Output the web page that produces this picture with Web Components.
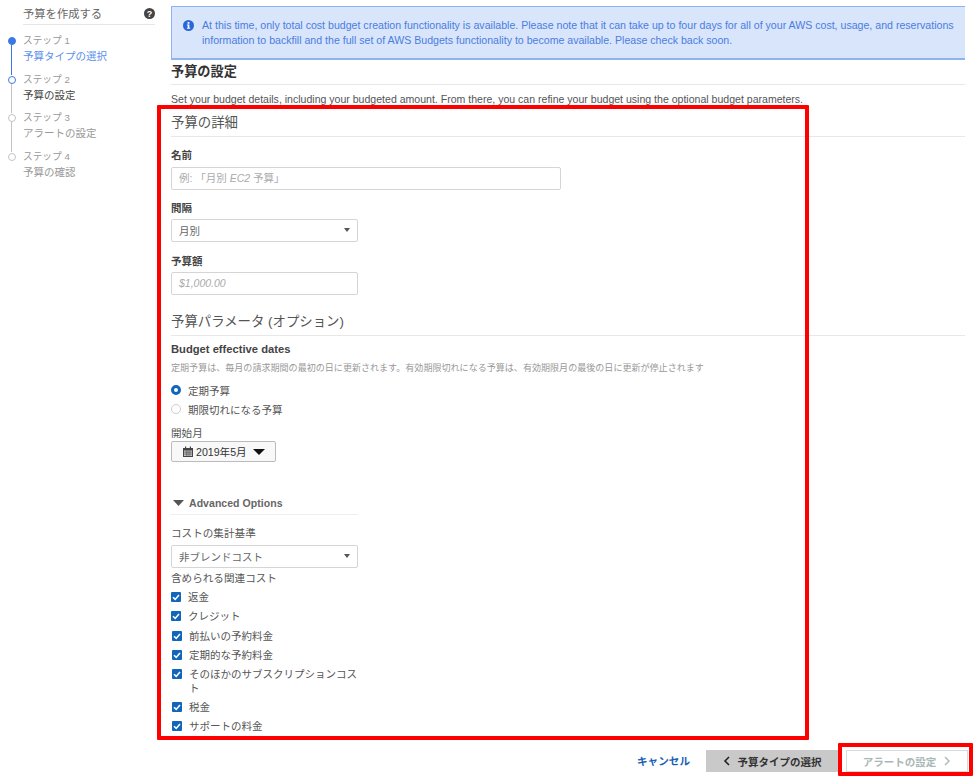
<!DOCTYPE html>
<html lang="ja"><head><meta charset="utf-8"><title>予算の設定</title>
<style>
html,body{margin:0;padding:0;background:#fff}
body{width:976px;height:776px;overflow:hidden;position:relative;font-family:"Liberation Sans","Noto Sans CJK JP",sans-serif;color:#444;font-size:10.5px}
</style></head><body>
<budget-layout>
  <budget-sidebar slot="side">
    <budget-step num="ステップ 1" name="予算タイプの選択" state="done"></budget-step>
    <budget-step num="ステップ 2" name="予算の設定" state="current"></budget-step>
    <budget-step num="ステップ 3" name="アラートの設定" state="todo"></budget-step>
    <budget-step num="ステップ 4" name="予算の確認" state="last"></budget-step>
  </budget-sidebar>
  <budget-notice>At this time, only total cost budget creation functionality is available. Please note that it can take up to four days for all of your AWS cost, usage, and reservations information to backfill and the full set of AWS Budgets functionality to become available. Please check back soon.</budget-notice>
  <section-head kind="main" style="margin-top:3px">予算の設定</section-head>
  <budget-text style="margin-top:8px;height:13px;font-size:10.55px">Set your budget details, including your budgeted amount. From there, you can refine your budget using the optional budget parameters.</budget-text>
  <section-head style="margin-top:6px">予算の詳細</section-head>
  <field-label style="margin-top:12px">名前</field-label>
  <text-field width="390">例: 「月別 <i>EC2</i> 予算」</text-field>
  <field-label style="margin-top:12px;margin-bottom:4px">間隔</field-label>
  <select-field value="月別"></select-field>
  <field-label style="margin-top:13px;margin-bottom:4px">予算額</field-label>
  <text-field width="187"><i>$1,000.00</i></text-field>
  <section-head style="margin-top:16px">予算パラメータ (オプション)</section-head>
  <field-label style="margin-top:7px;font-size:11.2px">Budget effective dates</field-label>
  <budget-text kind="hint" style="margin-top:1px">定期予算は、毎月の請求期間の最初の日に更新されます。有効期限切れになる予算は、有効期限月の最後の日に更新が停止されます</budget-text>
  <radio-option checked style="margin-top:8px">定期予算</radio-option>
  <radio-option style="margin-top:5px">期限切れになる予算</radio-option>
  <budget-text style="margin-top:11px;height:12px;line-height:12px">開始月</budget-text>
  <date-button>2019年5月</date-button>
  <advanced-head>Advanced Options</advanced-head>
  <budget-text style="margin-top:12px;height:13px;line-height:13px">コストの集計基準</budget-text>
  <select-field value="非ブレンドコスト" style="margin-top:5px"></select-field>
  <budget-text style="margin-top:4px;height:13px;line-height:13px">含められる関連コスト</budget-text>
  <check-option style="margin-top:5px">返金</check-option>
  <check-option style="margin-top:5px">クレジット</check-option>
  <check-option style="margin-top:6px" tight>前払いの予約料金</check-option>
  <check-option style="margin-top:5px" tight>定期的な予約料金</check-option>
  <check-option style="margin-top:5px" tight>そのほかのサブスクリプションコスト</check-option>
  <check-option style="margin-top:5px" tight>税金</check-option>
  <check-option style="margin-top:5px" tight>サポートの料金</check-option>
  <budget-footer slot="footer"></budget-footer>
</budget-layout>
<red-box style="left:157px;top:105px;width:644px;height:627px"></red-box>
<red-box style="left:838px;top:743px;width:127px;height:25px"></red-box>
<script>
const def=(n,html)=>customElements.define(n,class extends HTMLElement{
  connectedCallback(){if(this.shadowRoot)return;const r=this.attachShadow({mode:'open'});r.innerHTML=typeof html==='function'?html(this):html;}
});
def('budget-layout',`<style>
:host{display:block;width:976px;height:776px;position:relative;overflow:hidden}
.top{display:flex;height:745px}
.side{width:171px;flex:none}
.main{flex:none;width:794px;padding-top:6px;display:flex;flex-direction:column;box-sizing:border-box;overflow:hidden}
.foot{height:31px}
</style>
<div class="top"><div class="side"><slot name="side"></slot></div><div class="main"><slot></slot></div></div>
<div class="foot"><slot name="footer"></slot></div>`);
def('budget-sidebar',`<style>
:host{display:block}
.head{margin-left:23px;width:132px;height:25px;box-sizing:border-box;border-bottom:1px solid #e6e6e6;display:flex;justify-content:space-between;align-items:center;font-size:11.3px;color:#666;padding-top:2px;margin-bottom:11px}
svg{display:block}
</style>
<div class="head"><span>予算を作成する</span><svg width="11" height="11" viewBox="0 0 11 11"><circle cx="5.5" cy="5.5" r="5.5" fill="#444"/><text x="5.5" y="8.8" text-anchor="middle" font-family="Liberation Sans" font-weight="700" font-size="9" fill="#fff">?</text></svg></div>
<slot></slot>`);
def('budget-step',h=>{const s=h.getAttribute('state');
const dot=s==='done'?`background:#3b78e7;border-color:#3b78e7`:s==='current'?`background:#fff;border-color:#3b78e7`:`background:#fff;border-color:#c4c4c4`;
const line=s==='done'?'#3b78e7':'#c4c4c4';
const name={done:'#5a8fee',current:'#444',todo:'#999',last:'#999'}[s];
return `<style>
:host{display:flex;height:38.6px}
.rail{width:23px;flex:none;display:flex;flex-direction:column;align-items:center;box-sizing:border-box}
.dot{width:8px;height:8px;border:1.3px solid;border-radius:50%;box-sizing:border-box;margin-top:1px;flex:none}
.line{width:1px;flex:1;background:${line}}
.num{font-size:9.7px;color:#999;line-height:10px;height:10px}
.name{font-size:10.5px;color:${name};line-height:13px;margin-top:4px}
</style>
<div class="rail"><div class="dot" style="${dot}"></div>${s==='last'?'':'<div class="line"></div>'}</div>
<div><div class="num">${h.getAttribute('num')}</div><div class="name">${h.getAttribute('name')}</div></div>`});
def('budget-notice',`<style>
:host{display:flex;width:794px;height:54px;box-sizing:border-box;background:#d9e5fb;border:1px solid #8fb2f0;border-width:1px 0 2px 1px;color:#4a7de0;font-size:10.6px;line-height:15px;align-items:center;padding:1px 6px 0 11px;gap:8px}
svg{flex:none;display:block;margin-top:-15px}
</style>
<svg width="11" height="11" viewBox="0 0 11 11"><circle cx="5.5" cy="5.5" r="5.5" fill="#2a66d9"/><rect x="4.6" y="2" width="1.8" height="1.8" fill="#fff"/><path d="M3.9 4.6h2.5v3.2h.8v1H3.9v-1h.8V5.6h-.8z" fill="#fff"/></svg>
<div><slot></slot></div>`);
def('section-head',h=>{const m=h.getAttribute('kind')==='main';return `<style>
:host{display:block;box-sizing:border-box;border-bottom:1px solid #e8e8e8;font-size:${m?'13.2':'13.4'}px;height:${m?'22':'25'}px;line-height:${m?'18':'22'}px;width:794px;color:${m?'#333':'#555'};font-weight:${m?'700':'400'}}
</style><slot></slot>`});
def('budget-text',h=>`<style>
:host{display:block;font-size:${h.getAttribute('kind')==='hint'?'9.05px':'10.6px'};line-height:13px;color:${h.getAttribute('kind')==='hint'?'#999':'#555'};white-space:nowrap}
</style><slot></slot>`);
def('field-label',`<style>:host{display:block;font-size:10.5px;font-weight:700;color:#444;line-height:13px;height:13px;margin-bottom:5px}</style><slot></slot>`);
def('text-field',h=>`<style>
:host{display:block;width:${h.getAttribute('width')}px;height:23px;box-sizing:border-box;border:1px solid #d5d5d5;border-radius:2px;background:#fff;color:#aaa;font-size:10.5px;line-height:21px;padding-left:7px}
</style><slot></slot>`);
def('select-field',h=>`<style>
:host{display:flex;width:187px;height:23px;box-sizing:border-box;border:1px solid #d5d5d5;border-radius:2px;background:#fff;color:#666;font-size:10.5px;align-items:center;justify-content:space-between;padding:0 7px 1px 7px}
i{width:0;height:0;border:3.5px solid transparent;border-top:4px solid #555;border-bottom:0;display:block}
</style><span>${h.getAttribute('value')}</span><i></i>`);
def('radio-option',h=>{const c=h.hasAttribute('checked');return `<style>
:host{display:flex;align-items:center;gap:7px;height:14px;font-size:10.5px;color:#555}
b{width:10px;height:10px;border-radius:50%;box-sizing:border-box;background:#fff;${c?'border:3px solid #1166bb':'border:1px solid #ccc'};flex:none}
</style><b></b><span><slot></slot></span>`});
def('date-button',`<style>
:host{display:flex;align-items:center;width:105px;height:21px;box-sizing:border-box;margin-top:2px;border:1px solid #bbb;border-radius:2px;background:#f8f8f8;color:#333;font-size:10.6px;padding-left:11px;gap:3px}
svg{display:block;flex:none}
</style>
<svg width="10" height="11" viewBox="0 0 10 11"><path d="M0 2h10v9H0z" fill="#444"/><path d="M2 .5h1.200v3H2zM6.800 .5H8v3H6.800z" fill="#444"/><path d="M1 4.500h8v5.500H1z" fill="#ccc"/><path d="M1 6.200h8M1 8.100h8M3.300 4.500V10M5 4.500V10M6.900 4.500V10" stroke="#444" stroke-width=".6"/></svg>
<span><slot></slot></span>
<svg width="12" height="6" viewBox="0 0 12 6" style="margin-left:3px"><path d="M0 0h12L6 6z" fill="#111"/></svg>`);
def('advanced-head',`<style>
:host{display:flex;align-items:center;gap:5px;width:187px;height:23px;box-sizing:border-box;margin-top:30px;border-bottom:1px solid #eee;font-size:10.5px;font-weight:700;color:#666;padding-left:2px;padding-bottom:1px;letter-spacing:.05px}
svg{display:block;flex:none}
</style><svg width="11" height="6" viewBox="0 0 11 6"><path d="M0 0h11L5.500 6z" fill="#555"/></svg><span><slot></slot></span>`);
def('check-option',h=>`<style>
:host{display:flex;gap:7px;width:188px;font-size:10.5px;line-height:14px;color:#555;${h.hasAttribute('tight')?'padding-left:1px;box-sizing:border-box':''}}
svg{flex:none;display:block;margin-top:2px}
</style><svg width="10" height="10" viewBox="0 0 10 10"><rect width="10" height="10" rx="1" fill="#1166bb"/><path d="M2 5.200l2.200 2.200L8 3" stroke="#fff" stroke-width="1.600" fill="none"/></svg><span><slot></slot></span>`);
def('budget-footer',`<style>
:host{display:flex;justify-content:flex-end;align-items:flex-start;padding:5px 8px 0 0;height:31px;box-sizing:border-box;font-size:10.5px}
.c{color:#1a5fb4;font-weight:700;margin-right:16px;line-height:22px;font-size:10.6px}
.b{height:22px;box-sizing:border-box;display:flex;align-items:center;font-weight:700;color:#333}
.p{width:132px;background:#c9c9c9;justify-content:center;gap:8px;margin-right:8px}
.n{width:122px;border:1px solid #d5dbdb;background:#fff;color:#aab7b8;justify-content:center;gap:8px}
svg{display:block}
</style>
<span class="c">キャンセル</span>
<div class="b p"><svg width="7" height="10" viewBox="0 0 7 10"><path d="M6 1L2 5l4 4" stroke="#222" stroke-width="1.600" fill="none"/></svg><span>予算タイプの選択</span></div>
<div class="b n"><span>アラートの設定</span><svg width="7" height="10" viewBox="0 0 7 10"><path d="M1 1l4 4-4 4" stroke="#aab7b8" stroke-width="1.400" fill="none"/></svg></div>`);
def('red-box',`<style>:host{display:block;position:absolute;border:4px solid #f00;pointer-events:none;border-radius:1px}</style>`);
</script>
</body></html>
